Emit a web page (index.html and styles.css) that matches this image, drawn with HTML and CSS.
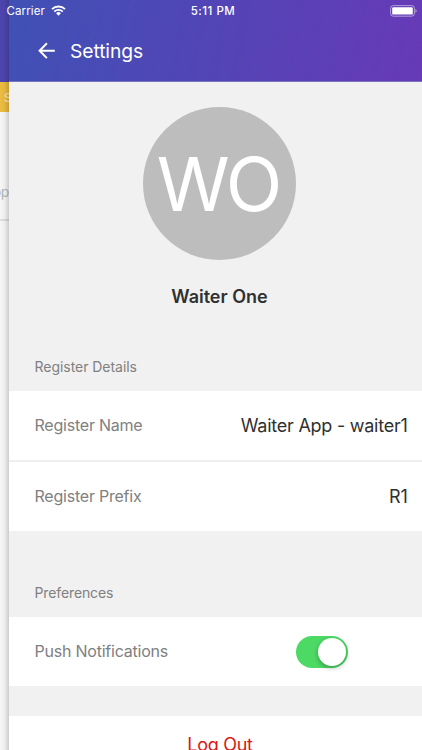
FILE: index.html
```html
<!DOCTYPE html>
<html lang="en">
<head>
<meta charset="utf-8">
<title>Settings</title>
<link rel="stylesheet" href="styles.css">
</head>
<body>
<div class="screen">
  <aside class="previous">
    <div class="previous-header"></div>
    <div class="previous-tab">S</div>
    <div class="previous-row"><span>app</span></div>
  </aside>
  <main class="panel">
    <header class="header">
      <svg class="back" width="18" height="18" viewBox="0 0 18 18" fill="none" stroke="#fff" stroke-width="2"><path d="M16.8 8.7H2M8.9 1.3L1.6 8.7l7.3 7.4"/></svg>
      <h1 class="title">Settings</h1>
    </header>
    <section class="profile">
      <div class="avatar"><span>WO</span></div>
      <div class="name"><span>Waiter One</span></div>
    </section>
    <h2 class="heading details"><span>Register Details</span></h2>
    <div class="row first"><span class="label">Register Name</span><span class="value">Waiter App - waiter1</span></div>
    <div class="row second"><span class="label">Register Prefix</span><span class="value">R1</span></div>
    <h2 class="heading preferences"><span>Preferences</span></h2>
    <div class="row push"><span class="label">Push Notifications</span><span class="switch"><span class="knob"></span></span></div>
    <div class="gap"></div>
    <div class="logout"><span>Log Out</span></div>
  </main>
  <div class="status">
    <span class="carrier">Carrier</span>
    <svg class="wifi" width="15" height="11" viewBox="0 0 15 11" fill="none" stroke="#fff" stroke-width="1.9"><path d="M1 4.2a9.2 9.2 0 0 1 13 0M3.3 6.6a6 6 0 0 1 8.4 0"/><path fill="#fff" stroke="none" d="M5.1 8.3a3.4 3.4 0 0 1 4.8 0L7.5 10.8z"/></svg>
    <span class="clock">5:11 PM</span>
    <svg class="battery" width="27" height="12" viewBox="0 0 27 12"><rect x=".6" y=".6" width="23.8" height="10.6" rx="2.7" fill="none" stroke="#fff" stroke-opacity=".5"/><rect x="2.2" y="2.2" width="20.6" height="7.4" rx="1.2" fill="#fff"/><path d="M25.4 4.1q1.3.5 1.3 1.8t-1.3 1.8z" fill="#fff" fill-opacity=".5"/></svg>
  </div>
</div>
</body>
</html>
```
FILE: styles.css
```css
* { box-sizing: border-box; }
body { margin: 0; font-family: Inter, "Liberation Sans", sans-serif; color: #303030; }
.screen { position: relative; display: grid; grid-template-columns: 9px 413px; width: 422px; height: 750px; overflow: hidden; background: #fff; white-space: nowrap; }

.previous { position: relative; overflow: hidden; background: #fff; }
.previous::after { content: ""; position: absolute; inset: 0; background: linear-gradient(90deg, rgba(0,0,0,.03), rgba(0,0,0,.07) 50%, rgba(0,0,0,.2)); }
.previous-header { height: 82px; background: #5048b5; }
.previous-tab { height: 30px; padding-left: 4px; background: #f5c342; color: #fff8e0; font-size: 12px; line-height: 32px; }
.previous-row { display: flex; justify-content: flex-end; height: 109px; padding-top: 70px; border-bottom: 2px solid #e6e6e6; color: #c0c0c0; font-size: 14px; line-height: 20px; letter-spacing: -.4px; }

.panel { height: 750px; overflow: hidden; background: #f1f1f1; }
.header { display: flex; align-items: center; height: 82px; padding: 20px 0 0 29px; background: linear-gradient(100deg, #4051b5 0%, #5046b6 43%, #673ab7 100%); border-bottom: 1px solid #7774c0; }
.title { margin: 0 0 0 14px; color: #fff; font-size: 19.3px; font-weight: 400; line-height: 24px; letter-spacing: -.1px; }
.profile { display: flex; flex-direction: column; align-items: center; height: 262px; padding: 25px 0 0 8px; }
.avatar { display: flex; align-items: center; justify-content: center; width: 153px; height: 153px; padding-right: 4px; border-radius: 50%; background: #bdbdbd; color: #fff; font-size: 74px; letter-spacing: -4px; }
.name { margin-top: 25px; font-size: 18px; font-weight: 600; line-height: 24px; }
.heading { margin: 0; padding-left: 25.5px; color: #808080; font-size: 14px; font-weight: 400; line-height: 20px; letter-spacing: -.04px; }
.details { height: 47px; padding-top: 13px; }
.preferences { height: 86px; padding-top: 52px; letter-spacing: -.12px; }
.row { display: flex; align-items: center; justify-content: space-between; padding: 0 14.5px 0 25.5px; background: #fff; }
.first { height: 71px; border-bottom: 2px solid #efefef; }
.second { height: 69px; }
.push { height: 69px; padding-right: 74px; }
.label { padding-bottom: 1px; color: #808080; font-size: 16px; letter-spacing: -.22px; }
.value { color: #303030; font-size: 18px; letter-spacing: -.25px; }
.switch { display: flex; justify-content: flex-end; width: 52.5px; height: 32px; padding: 2px; border-radius: 16px; background: #4cd964; }
.knob { width: 28px; height: 28px; border-radius: 50%; background: #fff; box-shadow: 0 2px 5px rgba(0,0,0,.28); }
.gap { height: 30px; }
.logout { height: 60px; padding: 17px 0 0 9px; background: #fff; color: #dd1515; font-size: 18px; line-height: 24px; letter-spacing: -.3px; text-align: center; }

.status { position: absolute; inset: 0 0 auto; display: grid; grid-template-columns: 51px 129px 66px 1fr 32px; align-items: center; height: 21px; color: #fff; font-size: 11.5px; }
.carrier { padding-left: 6.5px; letter-spacing: .1px; }
.clock { text-align: center; font-weight: 500; letter-spacing: .5px; }
.battery { grid-column: 5; }
```
